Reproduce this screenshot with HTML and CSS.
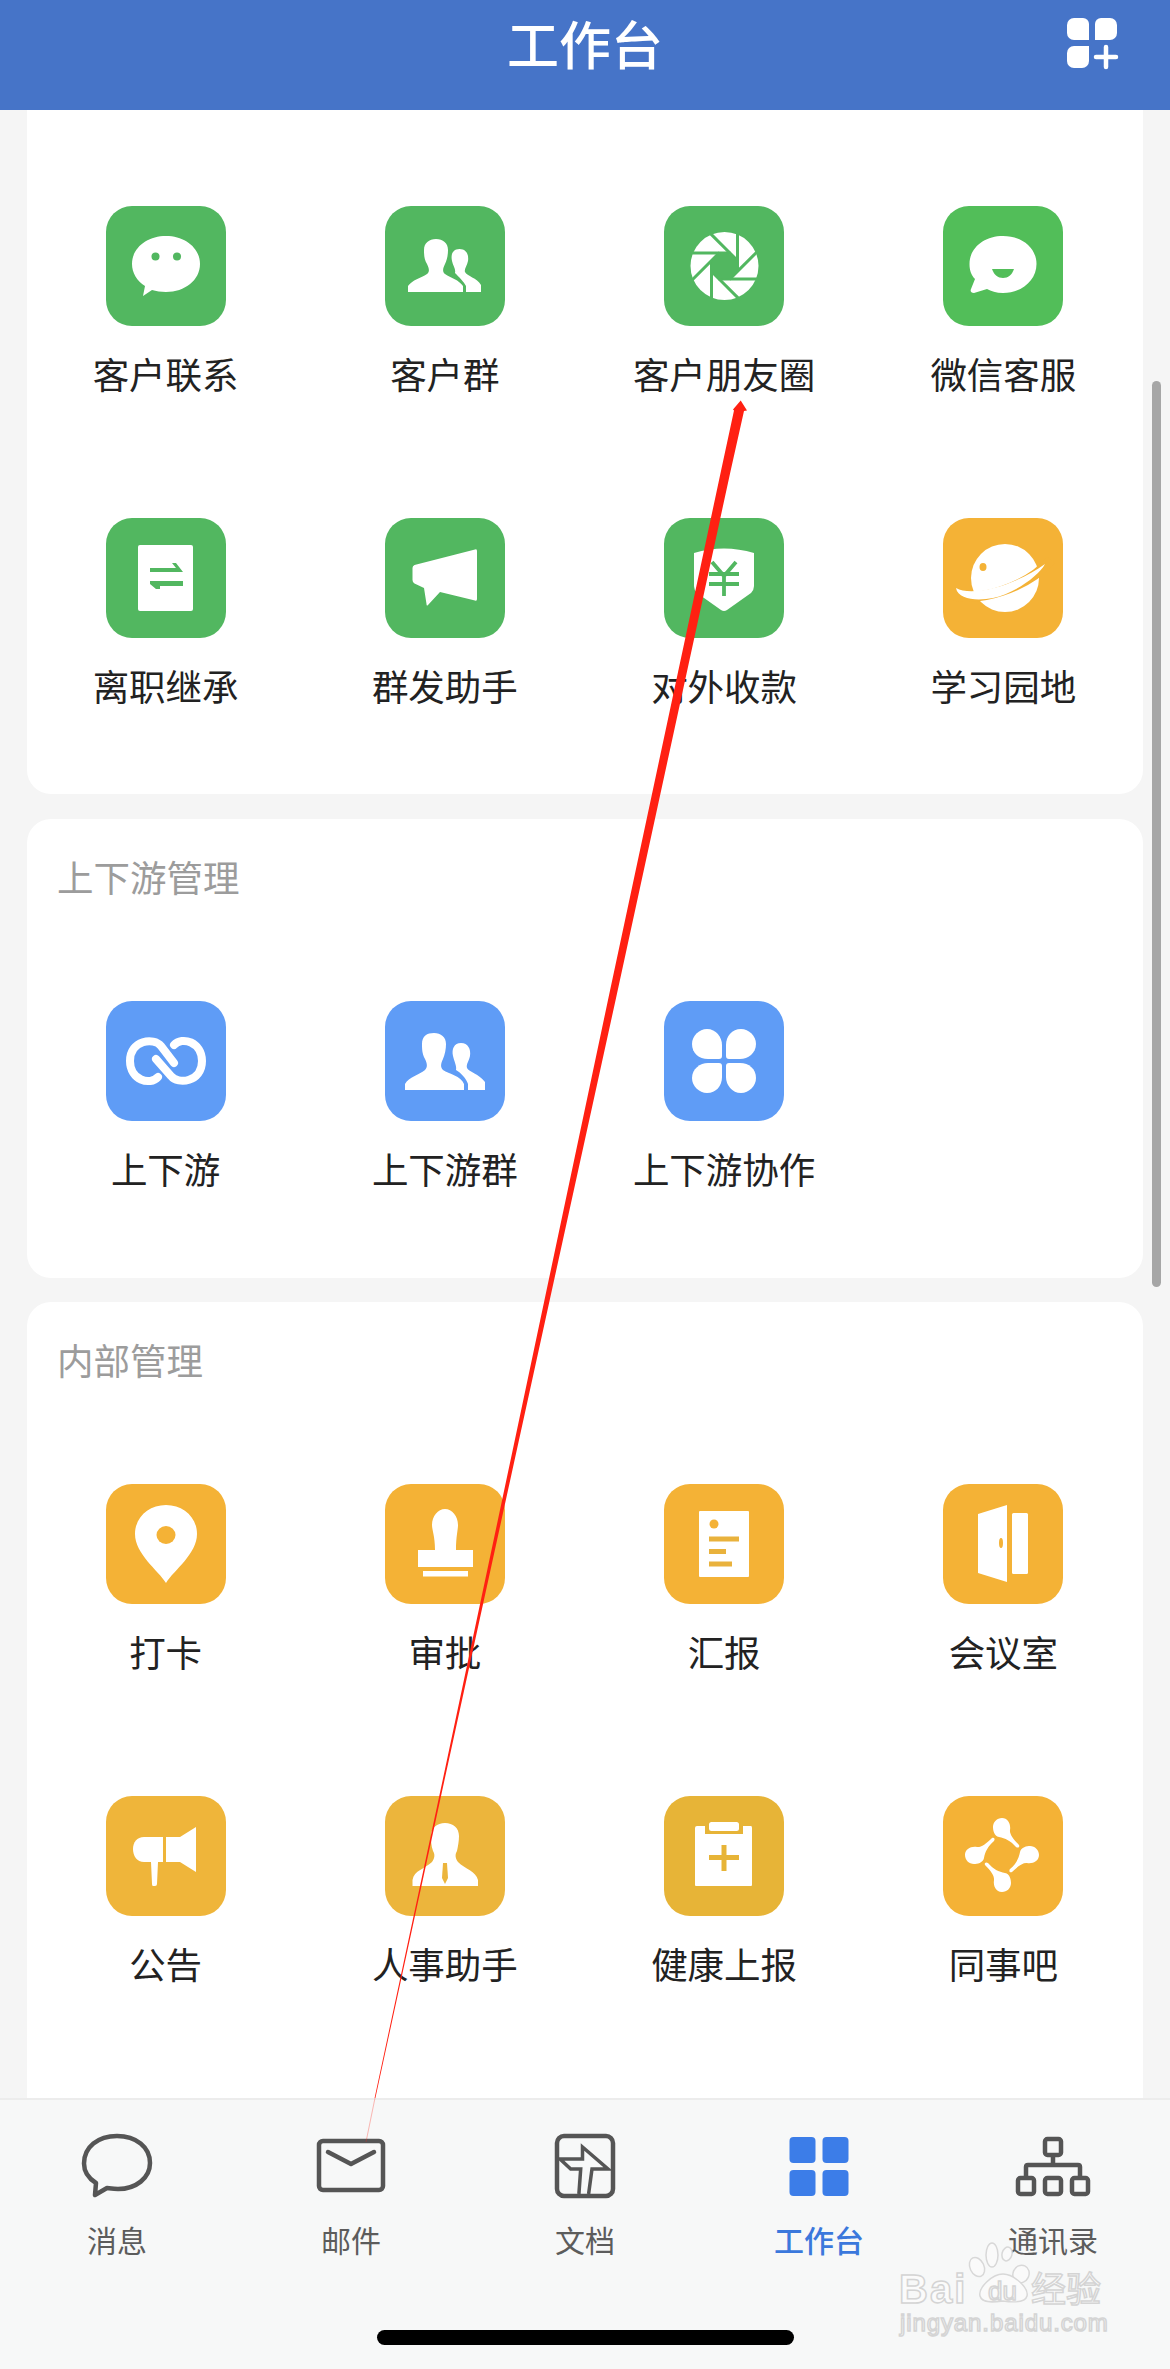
FILE: index.html
```html
<!DOCTYPE html>
<html lang="zh-CN">
<head>
  <meta charset="UTF-8">
  <meta name="viewport" content="width=device-width, initial-scale=1.0">
  <title>工作台</title>
  <link rel="stylesheet" href="styles.css">
</head>
<body>

  <header class="topbar">
    <span></span>
    <h1 class="topbar-title">工作台</h1>
    <svg class="topbar-add" viewBox="0 0 52 52">
      <path d="M7 0H16A6 6 0 0 1 22 6V22H7A7 7 0 0 1 0 15V7A7 7 0 0 1 7 0Z" fill="#fff"/>
      <path d="M28 6A6 6 0 0 1 34 0H43A7 7 0 0 1 50 7V15A7 7 0 0 1 43 22H28Z" fill="#fff"/>
      <path d="M0 35A7 7 0 0 1 7 28H22V43A7 7 0 0 1 15 50H7A7 7 0 0 1 0 43Z" fill="#fff"/>
      <path d="M29 39H49M39 29V49" stroke="#fff" stroke-width="4.5" stroke-linecap="round"/>
    </svg>
  </header>

  <main class="content">

    <section class="card card-top">
      <div class="apps">
        <div class="app">
          <svg class="tile green" viewBox="0 0 120 120">
            <path d="M60 30C79 30 94 42 94 58C94 74 79 86 60 86C55 86 50 85 46 84L37 90L39 80C31 75 26 67 26 58C26 42 41 30 60 30Z" fill="#fff"/>
            <circle cx="49.5" cy="50.5" r="4" fill="#52b760"/><circle cx="71" cy="50.5" r="4" fill="#52b760"/>
          </svg>
          <span class="app-name">客户联系</span>
        </div>
        <div class="app">
          <svg class="tile green" viewBox="0 0 120 120">
            <path d="M23 86V80C27 74 36 72 42 68C45 66 44 62 42 58C39 53 39 48 39 44C39 37 44 33 51 33C58 33 63 37 63 44C63 49 62 54 60 58C58 62 57 66 60 68C66 72 74 74 78 80V86Z" fill="#fff"/>
            <path d="M81 86V80C79 76 74 71 70 67C71 63 68 60 67 55C65.500 48 68 43 74.500 43C81 43 84 48 83 55C82 60 79 63 80 66C82 70 92 72 96 79V86Z" fill="#fff"/>
          </svg>
          <span class="app-name">客户群</span>
        </div>
        <div class="app">
          <svg class="tile green" viewBox="0 0 120 120">
            <circle cx="60.500" cy="60" r="34" fill="#fff"/>
            <g transform="translate(60.500 60)" stroke="#52b760" stroke-width="3">
              <line x1="6" y1="-13" x2="-36" y2="-13"/>
              <line x1="6" y1="-13" x2="-36" y2="-13" transform="rotate(45)"/>
              <line x1="6" y1="-13" x2="-36" y2="-13" transform="rotate(90)"/>
              <line x1="6" y1="-13" x2="-36" y2="-13" transform="rotate(135)"/>
              <line x1="6" y1="-13" x2="-36" y2="-13" transform="rotate(180)"/>
              <line x1="6" y1="-13" x2="-36" y2="-13" transform="rotate(225)"/>
              <line x1="6" y1="-13" x2="-36" y2="-13" transform="rotate(270)"/>
              <line x1="6" y1="-13" x2="-36" y2="-13" transform="rotate(315)"/>
              <circle r="13" fill="#52b760" stroke="none"/>
            </g>
          </svg>
          <span class="app-name">客户朋友圈</span>
        </div>
        <div class="app">
          <svg class="tile green-bright" viewBox="0 0 120 120">
            <path d="M60 30C79 30 93.500 42 93.500 58C93.500 74 79 87 60 87C53 87 48 85 44 83L31 87C28 87 27 85 28 83L32 73C28 69 26.500 64 26.500 58C26.500 42 41 30 60 30Z" fill="#fff"/>
            <path d="M49 63H71C69 69 65 72 60 72C55 72 51 69 49 63Z" fill="#52be59"/>
          </svg>
          <span class="app-name">微信客服</span>
        </div>
        <div class="app">
          <svg class="tile green" viewBox="0 0 120 120">
            <rect x="32" y="27" width="55" height="66" rx="2" fill="#fff"/>
            <path d="M44 50H70L66 45H70L77 54H44ZM44 63H77V68H54V71H50L44 66Z" fill="#52b760"/>
          </svg>
          <span class="app-name">离职继承</span>
        </div>
        <div class="app">
          <svg class="tile green" viewBox="0 0 120 120">
            <path d="M90 31.500Q92 30.500 92 33V81Q92 83.500 90 82.500L55 74L43 87Q41.500 88.500 41.500 86L39 70L29.500 65.500Q27.500 64.500 27.500 62V50Q27.500 48 29.500 47Z" fill="#fff"/>
          </svg>
          <span class="app-name">群发助手</span>
        </div>
        <div class="app">
          <svg class="tile green" viewBox="0 0 120 120">
            <path d="M30 35Q60 26 90 35V68Q90 72 87 75L63 92Q60 94 57 92L33 75Q30 72 30 68Z" fill="#fff"/>
            <path d="M48 44L60 58L72 44M45 56H75M45 66H75M60 58V78" fill="none" stroke="#52b760" stroke-width="3.800"/>
          </svg>
          <span class="app-name">对外收款</span>
        </div>
        <div class="app">
          <svg class="tile orange" viewBox="0 0 120 120">
            <circle cx="62" cy="60" r="34" fill="#fff"/>
            <path d="M6 76C35 86 85 69 108 42" fill="none" stroke="#f4b236" stroke-width="10"/>
            <path d="M13 70C30 80 75 66 102 46C96 58 70 76 50 80C35 83 15 82 13 70Z" fill="#fff"/>
            <ellipse cx="40" cy="49" rx="3.500" ry="4" fill="#f4b236"/>
          </svg>
          <span class="app-name">学习园地</span>
        </div>
      </div>
    </section>

    <section class="card">
      <h2 class="card-title">上下游管理</h2>
      <div class="apps">
        <div class="app">
          <svg class="tile blue" viewBox="0 0 120 120">
            <path d="M68 62L55 45C48 36 24 39 24 60C24 79 44 85 52 76" fill="none" stroke="#fff" stroke-width="8" stroke-linecap="round"/>
            <path d="M50 58L65 75C72 84 96 81 96 60C96 41 76 35 68 44" fill="none" stroke="#fff" stroke-width="8" stroke-linecap="round"/>
          </svg>
          <span class="app-name">上下游</span>
        </div>
        <div class="app">
          <svg class="tile blue" viewBox="0 0 120 120">
            <path d="M20 89V83C24 76 34 74 40 69C43 66 42 62 40 58C37 53 37 47 37 43C37 35 42 32 49 32C56 32 61 36 61 43C61 48 60 53 58 58C56 62 55 66 58 69C64 73 76 75 79 83V89Z" fill="#fff"/>
            <path d="M83 89V83C81 77 76 72 71 69C72 65 69 60 68 55C66.500 48 69 42 76 42C83 42 86 48 85 55C84 60 81 63 82 67C84 71 94 73 100 81V89Z" fill="#fff"/>
          </svg>
          <span class="app-name">上下游群</span>
        </div>
        <div class="app">
          <svg class="tile blue" viewBox="0 0 120 120">
            <path d="M43 28C52 28 58 36 58 44V55Q58 58 55 58H44C35 58 28 52 28 43C28 35 35 28 43 28Z" fill="#fff"/>
            <path d="M43 28C52 28 58 36 58 44V55Q58 58 55 58H44C35 58 28 52 28 43C28 35 35 28 43 28Z" fill="#fff" transform="rotate(90 60 60)"/>
            <path d="M43 28C52 28 58 36 58 44V55Q58 58 55 58H44C35 58 28 52 28 43C28 35 35 28 43 28Z" fill="#fff" transform="rotate(180 60 60)"/>
            <path d="M43 28C52 28 58 36 58 44V55Q58 58 55 58H44C35 58 28 52 28 43C28 35 35 28 43 28Z" fill="#fff" transform="rotate(270 60 60)"/>
          </svg>
          <span class="app-name">上下游协作</span>
        </div>
      </div>
    </section>

    <section class="card card-last">
      <h2 class="card-title">内部管理</h2>
      <div class="apps">
        <div class="app">
          <svg class="tile orange" viewBox="0 0 120 120">
            <path d="M60 99C52 86 29 70 29 50C29 33 43 21 60 21C77 21 91 33 91 50C91 70 68 86 60 99Z" fill="#fff"/>
            <ellipse cx="60" cy="51" rx="9.500" ry="9" fill="#f4b236"/>
          </svg>
          <span class="app-name">打卡</span>
        </div>
        <div class="app">
          <svg class="tile orange" viewBox="0 0 120 120">
            <path d="M60 25C67 25 73 32 73 41C73 46 71 52 71 66H88V83H33V66H50C50 52 47 46 47 41C47 32 53 25 60 25Z" fill="#fff"/>
            <rect x="38" y="87" width="45" height="5.500" fill="#fff"/>
          </svg>
          <span class="app-name">审批</span>
        </div>
        <div class="app">
          <svg class="tile orange" viewBox="0 0 120 120">
            <rect x="35" y="27" width="50" height="66" rx="1" fill="#fff"/>
            <circle cx="50" cy="40" r="4.500" fill="#f4b236"/>
            <rect x="45" y="52.500" width="30" height="5" fill="#e9b23c"/>
            <rect x="45" y="65" width="17" height="5" fill="#e9b23c"/>
            <rect x="45" y="77.500" width="23" height="5" fill="#e9b23c"/>
          </svg>
          <span class="app-name">汇报</span>
        </div>
        <div class="app">
          <svg class="tile orange" viewBox="0 0 120 120">
            <path d="M35 30L64 21V98L35 89Z" fill="#fff"/>
            <rect x="69" y="29" width="16" height="61" rx="1.500" fill="#fff"/>
            <ellipse cx="58" cy="59" rx="2" ry="5" fill="#f4b236"/>
          </svg>
          <span class="app-name">会议室</span>
        </div>
        <div class="app">
          <svg class="tile orange-soft" viewBox="0 0 120 120">
            <path d="M38 41H57V66H38C31 66 27 60 27 53C27 46 31 41 38 41Z" fill="#fff"/>
            <path d="M60 41H74L90 31V76L74 66H60Z" fill="#fff"/>
            <path d="M45 66H52L51 88Q51 90 49 90H47Q46 90 46 88Z" fill="#fff"/>
          </svg>
          <span class="app-name">公告</span>
        </div>
        <div class="app">
          <svg class="tile orange-muted" viewBox="0 0 120 120">
            <path d="M27.500 90V84C29 74 40 73 47 66C50 62 50 58 48 55C46 50 46 44 46 40C46 32 52 27 60 27C68 27 74 32 74 40C74 45 73 50 72 55C70 58 70 62 73 66C80 73 91 75 93 84V90Z" fill="#fff"/>
            <path d="M58 67H62L63 82L60 88L57 82Z" fill="#ecb53c"/>
          </svg>
          <span class="app-name">人事助手</span>
        </div>
        <div class="app">
          <svg class="tile orange-dark" viewBox="0 0 120 120">
            <path d="M33 30H41V38H79V30H87Q88 30 88 32V89Q88 90 87 90H32Q31 90 31 89V32Q31 30 33 30Z" fill="#fff"/>
            <rect x="45" y="26" width="30" height="9" rx="2.500" fill="#fff"/>
            <path d="M45 61.500H75M60 49V75" stroke="#e7b437" stroke-width="5"/>
          </svg>
          <span class="app-name">健康上报</span>
        </div>
        <div class="app">
          <svg class="tile orange" viewBox="0 0 120 120">
            <path d="M59 22C65 22 68 28 67 34C66.500 38 70 43 76 49C77 51 75 52.500 73 51C68 45 62 42 56 41C51 40 50 34 50 31C50 26 54 22 59 22Z" fill="#fff"/>
            <path d="M59 22C65 22 68 28 67 34C66.500 38 70 43 76 49C77 51 75 52.500 73 51C68 45 62 42 56 41C51 40 50 34 50 31C50 26 54 22 59 22Z" fill="#fff" transform="rotate(90 59 59)"/>
            <path d="M59 22C65 22 68 28 67 34C66.500 38 70 43 76 49C77 51 75 52.500 73 51C68 45 62 42 56 41C51 40 50 34 50 31C50 26 54 22 59 22Z" fill="#fff" transform="rotate(180 59 59)"/>
            <path d="M59 22C65 22 68 28 67 34C66.500 38 70 43 76 49C77 51 75 52.500 73 51C68 45 62 42 56 41C51 40 50 34 50 31C50 26 54 22 59 22Z" fill="#fff" transform="rotate(270 59 59)"/>
          </svg>
          <span class="app-name">同事吧</span>
        </div>
      </div>
    </section>

  </main>

  <nav class="tabbar">
    <div class="tab">
      <svg class="tab-icon" viewBox="0 0 84 72">
        <path d="M21 53C13 48 9 41 9 33.500C9 17 23 6 42 6C61 6 75 17 75 33C75 48 61 59 43 59C39 59 36 58.500 32 58L20 65Z" fill="none" stroke="#555" stroke-width="4.500" stroke-linejoin="round"/>
      </svg>
      <span>消息</span>
    </div>
    <div class="tab">
      <svg class="tab-icon" viewBox="0 0 84 72">
        <rect x="10" y="11" width="64" height="49" rx="4" fill="none" stroke="#555" stroke-width="4.500"/>
        <path d="M19 22L42 34L65 22" fill="none" stroke="#555" stroke-width="4.500" stroke-linecap="round" stroke-linejoin="round"/>
      </svg>
      <span>邮件</span>
    </div>
    <div class="tab">
      <svg class="tab-icon" viewBox="0 0 84 72">
        <rect x="14" y="6" width="56" height="60" rx="7" fill="none" stroke="#555" stroke-width="4.500"/>
        <path d="M35.900 64L37.700 39H27.700L17 29H39.500V17L65 39H49L45.600 64" fill="none" stroke="#555" stroke-width="3.500"/>
      </svg>
      <span>文档</span>
    </div>
    <div class="tab tab-active">
      <svg class="tab-icon" viewBox="0 0 84 72">
        <rect x="12.500" y="7" width="26" height="26" rx="4" fill="#3c7de8"/>
        <rect x="45.500" y="7" width="26" height="26" rx="4" fill="#3c7de8"/>
        <rect x="12.500" y="40" width="26" height="26" rx="4" fill="#3c7de8"/>
        <rect x="45.500" y="40" width="26" height="26" rx="4" fill="#3c7de8"/>
      </svg>
      <span>工作台</span>
    </div>
    <div class="tab">
      <svg class="tab-icon" viewBox="0 0 84 72">
        <g fill="none" stroke="#555" stroke-width="4.500">
          <rect x="34" y="9" width="16" height="16" rx="2.500"/>
          <rect x="7" y="48" width="16" height="16" rx="2.500"/>
          <rect x="34" y="48" width="16" height="16" rx="2.500"/>
          <rect x="61" y="48" width="16" height="16" rx="2.500"/>
          <path d="M15 46V37Q15 35 17 35H67Q69 35 69 37V46M42 25V35"/>
        </g>
      </svg>
      <span>通讯录</span>
    </div>
    <div class="home-bar"></div>
  </nav>

  <div class="scrollbar"></div>

  <svg class="markup" viewBox="0 0 1170 2369">
    <polygon class="arrow" points="740.700,400.500 733,409.500 734,410.500 721.200,470 608,1000 510.600,1460 442.700,1780 374.600,2098 375.400,2098 444.500,1780 514.600,1460 615.600,1000 730.800,470 744,411 747,410.500"/>
    <line class="arrow-tail" x1="375" y1="2098" x2="366" y2="2142"/>
    <g class="paw">
      <ellipse cx="977" cy="2267" rx="7" ry="10" transform="rotate(-25 977 2267)"/>
      <ellipse cx="992" cy="2255" rx="6" ry="12"/>
      <ellipse cx="1007" cy="2254" rx="5" ry="7" transform="rotate(15 1007 2254)"/>
      <ellipse cx="1021" cy="2274" rx="8" ry="9" transform="rotate(25 1021 2274)"/>
      <path d="M1003 2274C1014 2274 1029 2288 1027 2296C1025 2304 1010 2302 1003 2301C996 2302 982 2304 980 2296C978 2288 992 2274 1003 2274Z"/>
    </g>
    <text class="mark mark-big" x="899" y="2303">Bai</text>
    <text class="mark mark-du" x="988" y="2300">du</text>
    <text class="mark mark-cn" x="1031" y="2302">经验</text>
    <text class="mark mark-url" x="900" y="2331">jingyan.baidu.com</text>
  </svg>

</body>
</html>
```

FILE: styles.css
```css
* {
  box-sizing: border-box;
}

body {
  font-family: 'Noto Sans CJK SC', 'Noto Sans', sans-serif;
  background-color: #f5f5f5;
  color: #222;
  margin: 0;
  height: 2369px;
  overflow: hidden;
  display: flex;
  flex-direction: column;
  position: relative;
}

.topbar {
  background-color: #4674c8;
  color: #fff;
  height: 110px;
  flex-shrink: 0;
  display: grid;
  grid-template-columns: 1fr auto 1fr;
  padding-right: 51px;
  padding-left: 51px;
  z-index: 1;
}

.topbar-title {
  margin: 0;
  font-size: 52px;
  font-weight: 500;
  line-height: 86px;
}

.topbar-add {
  width: 52px;
  height: 52px;
  margin-top: 18px;
  justify-self: end;
}

.content {
  flex: 1;
  min-height: 0;
  overflow: hidden;
  padding: 0 27px;
  display: flex;
  flex-direction: column;
  gap: 24px;
}

.card {
  background-color: #fff;
  border-radius: 24px;
  padding: 33px 0 84px;
  flex-shrink: 0;
}

.card-top {
  padding-top: 96px;
  padding-bottom: 83px;
  margin-bottom: 1px;
  border-radius: 0 0 24px 24px;
}

.card-last {
  min-height: 900px;
}

.card-title {
  margin: 0 0 99px;
  padding-left: 30px;
  font-size: 36.5px;
  font-weight: 400;
  line-height: 50px;
  color: #9c9c9c;
}

.apps {
  display: grid;
  grid-template-columns: repeat(4, 1fr);
  row-gap: 119px;
  margin-left: -1px;
}

.app {
  display: flex;
  flex-direction: column;
  align-items: center;
  gap: 23px;
}

.tile {
  display: block;
  width: 120px;
  height: 120px;
  border-radius: 26px;
}

.green { background-color: #52b760; }
.green-bright { background-color: #52be59; }
.orange { background-color: #f4b236; }
.orange-soft { background-color: #efb53a; }
.orange-muted { background-color: #ecb53c; }
.orange-dark { background-color: #e7b437; }
.blue { background-color: #5f9cf6; }

.app-name {
  font-size: 36.5px;
  line-height: 50px;
  white-space: nowrap;
}

.tabbar {
  height: 271px;
  flex-shrink: 0;
  background-color: #f7f8f8;
  border-top: 2px solid #ececec;
  display: grid;
  grid-template-columns: repeat(5, 1fr);
  align-items: start;
  padding-top: 30px;
  position: relative;
  color: #5c5c5c;
}

.tab {
  display: flex;
  flex-direction: column;
  align-items: center;
  gap: 16px;
  font-size: 30px;
  line-height: 42px;
}

.tab-icon {
  display: block;
  width: 84px;
  height: 72px;
}

.tab-active {
  color: #3b78dc;
  font-weight: 500;
}

.home-bar {
  position: absolute;
  left: 377px;
  top: 230px;
  width: 417px;
  height: 15px;
  background-color: #000;
  border-radius: 8px;
}

.scrollbar {
  position: absolute;
  left: 1152px;
  top: 381px;
  width: 9px;
  height: 906px;
  border-radius: 5px;
  background-color: #a6a6a6;
}

.markup {
  position: absolute;
  left: 0;
  top: 0;
  width: 1170px;
  height: 2369px;
  pointer-events: none;
}

.arrow {
  fill: #ff2012;
}

.arrow-tail {
  stroke: #ff2012;
  stroke-width: 1;
  opacity: 0.3;
}

.paw ellipse, .paw path {
  fill: #fafafa;
  stroke: #d8d8d8;
  stroke-width: 1.5;
}

.mark {
  fill: #fbfbfb;
  stroke: #d4d4d4;
  stroke-width: 1.5;
}

.mark-big {
  font-family: 'Liberation Sans', sans-serif;
  font-size: 40px;
  font-weight: 700;
  letter-spacing: 2px;
}

.mark-du {
  font-family: 'Liberation Sans', sans-serif;
  font-size: 26px;
}

.mark-cn {
  font-family: 'Noto Sans CJK SC', sans-serif;
  font-size: 35px;
}

.mark-url {
  font-family: 'Liberation Sans', sans-serif;
  font-size: 24px;
  letter-spacing: 0.9px;
}
```
